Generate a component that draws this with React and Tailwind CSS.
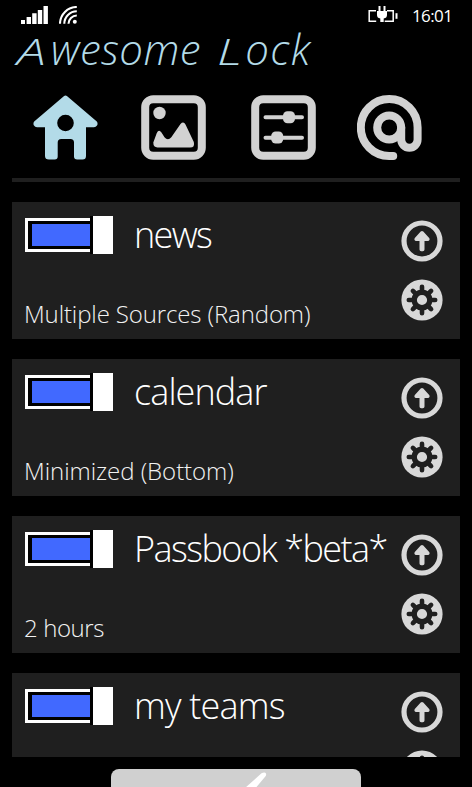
const widgets = [
  { name: "news", detail: "Multiple Sources (Random)", nameTracking: "tracking-[-1.7px]", detailTracking: "tracking-[-0.12px]" },
  { name: "calendar", detail: "Minimized (Bottom)", nameTracking: "tracking-[-0.9px]", detailTracking: "tracking-[-0.05px]" },
  { name: "Passbook *beta*", detail: "2 hours", nameTracking: "tracking-[-1.55px]", detailTracking: "tracking-[-0.4px]" },
  { name: "my teams", nameTracking: "tracking-[-0.8px]" },
];

function SignalIcon() {
  return (
    <svg width="27" height="18" viewBox="0 0 27 18" fill="#fff">
      <path d="M0 14h4v4H0zM5.6 11h4.4v7h-4.4zM11.2 7.2h4.4V18h-4.4zM16.8 4h4.4v14h-4.4zM22.5 0h4.4v18h-4.4z" />
    </svg>
  );
}

function WifiIcon() {
  return (
    <svg width="18" height="18" viewBox="0 0 18 18" fill="none" stroke="#fff" strokeWidth="2.1">
      <path d="M1 17.8A16.8 16.8 0 0 1 17.8 1M5.3 17.8A12.5 12.5 0 0 1 17.8 5.3M9.5 17.8a8.3 8.3 0 0 1 8.3-8.3" />
      <circle cx="15.8" cy="15.8" r="2" fill="#fff" stroke="none" />
    </svg>
  );
}

function BatteryIcon() {
  return (
    <svg width="30" height="18" viewBox="0 0 30 18" fill="none" stroke="#fff" strokeWidth="1.5">
      <path d="M8 4.8H1.2v10.4h7M19 4.8h6.2v10.4h-8.5" />
      <path d="M28.5 7.2v5.6" strokeWidth="2" />
      <path d="M9 5h10v4q0 3-3.3 3.5V16h-3.4v-3.5Q9 12 9 9zM10.5 0h2v6h-2zM15.5 0h2v6h-2z" fill="#fff" stroke="none" />
    </svg>
  );
}

function HomeIcon() {
  return (
    <svg width="65" height="65" viewBox="0 0 65 65" fill="#b3dbe8">
      <path
        fillRule="evenodd"
        d="M30.8 1.2q1.7-1.4 3.4 0L63.8 26.5q1.4 2 .2 4-1.2 1.7-3 1.7h-8V61q0 3.5-3.5 3.5h-5.3q-3.2 0-3.2-3V47.5q0-3.5-3.5-3.5h-9.3q-3.5 0-3.5 3.5v14q0 3-3 3h-5.7Q12 64.5 12 61V32.2H4q-2 0-3-1.7-1.2-2 .2-4zM32.5 19.7a8.3 8.3 0 1 0 0 16.6 8.3 8.3 0 0 0 0-16.6z"
      />
    </svg>
  );
}

function PictureIcon() {
  return (
    <svg width="65" height="65" viewBox="0 0 65 65" fill="#d2d2d2">
      <rect x="4.2" y="4.2" width="56.6" height="56.6" rx="8" fill="none" stroke="#d2d2d2" strokeWidth="8" />
      <circle cx="18.5" cy="18" r="6.2" />
      <path d="M12.3 47.5l3.5-9.5q2-4.2 4.5-.8l3.2 5q3.4 4 6.8 0L39.5 29q3-3.2 5 .5l8.3 17.5q1.5 5.5-3.8 5.5H16.500q-4.200-.2-4.200-5z" />
    </svg>
  );
}

function SlidersIcon() {
  return (
    <svg width="65" height="65" viewBox="0 0 65 65" fill="none" stroke="#d2d2d2">
      <rect x="4.2" y="4.2" width="56.6" height="56.6" rx="8" strokeWidth="8" />
      <path d="M14.5 22.3h36.5M14.5 42.7h36.5" strokeWidth="4" strokeLinecap="round" />
      <rect x="32" y="16.3" width="12" height="12" rx="4.5" fill="#d2d2d2" stroke="none" />
      <rect x="20.2" y="36.5" width="12" height="12" rx="4.5" fill="#d2d2d2" stroke="none" />
    </svg>
  );
}

function AtIcon() {
  return (
    <svg width="65" height="65" viewBox="0 0 65 65" fill="none" stroke="#d2d2d2" strokeWidth="8" strokeLinecap="round">
      <circle cx="32.2" cy="32.5" r="12" />
      <path d="M44.2 32.5v12a8.2 8.2 0 0 0 16.4 0V32.5A28.4 28.4 0 1 0 32.2 60.9h4" />
    </svg>
  );
}

function ArrowIcon() {
  return (
    <svg className="block" width="42" height="42" viewBox="-21 -21 42 42" fill="#d8d8d8">
      <circle r="18" fill="none" stroke="#d8d8d8" strokeWidth="5.2" />
      <path d="M-1.3-9.5q1.3-1 2.6 0L7.2-3q1.200 2-1 3H2.5v8.5q0 1.7-1.7 1.7h-1.6q-1.7 0-1.7-1.7V0h-3.7q-2.2-1-1-3z" />
    </svg>
  );
}

function GearIcon() {
  return (
    <svg className="block" width="42" height="42" viewBox="-21 -21 42 42">
      <circle r="20.6" fill="#d8d8d8" />
      <circle r="7.8" fill="none" stroke="#1f1f1f" strokeWidth="5.4" />
      <path
        d="M0-9v-4.2M0 9v4.2M-9 0h-4.2M9 0h4.2M-6.5-6.5l-2.6-2.6M6.5 6.5l2.6 2.6M-6.5 6.5l-2.6 2.6M6.5-6.5l2.6-2.6"
        stroke="#1f1f1f"
        strokeWidth="4.6"
        strokeLinecap="round"
      />
    </svg>
  );
}

function Toggle() {
  return (
    <div className="flex h-[38px] w-[88px] shrink-0 items-center">
      <div className="h-[34px] w-[65px] border-[3px] border-r-0 border-white bg-black py-[3px] pl-[4px]">
        <div className="h-full bg-[#4169ff]" />
      </div>
      <div className="h-[38px] w-[23px] border-l-[3px] border-black bg-white" />
    </div>
  );
}

function WidgetCard({ name, detail, nameTracking, detailTracking }) {
  return (
    <section className="flex h-[137.3px] shrink-0 bg-[#1f1f1f] pl-[13px]">
      <div className="flex min-w-0 flex-1 flex-col">
        <div className="flex pt-[14px]">
          <Toggle />
          <h2 className={`ml-[21px] mt-[-5px] h-[48px] whitespace-nowrap text-[36px] leading-[48px] font-light text-white ${nameTracking}`}>
            {name}
          </h2>
        </div>
        {detail && (
          <p className={`-ml-px mt-[39px] whitespace-nowrap text-[24px] leading-[32px] font-light text-[#f2f2f2] ${detailTracking}`}>{detail}</p>
        )}
      </div>
      <div className="mr-[17px] flex w-[42px] flex-col gap-[17px] pt-[18px]">
        <button><ArrowIcon /></button>
        <button><GearIcon /></button>
      </div>
    </section>
  );
}

export default function App() {
  return (
    <div className="flex h-[787px] w-[472px] flex-col overflow-hidden bg-black font-['Open_Sans',sans-serif]">
      <header className="flex h-[30px] shrink-0 pl-[21px] pr-[21px]">
        <div className="flex gap-[11px] pt-[6px]">
          <SignalIcon />
          <WifiIcon />
        </div>
        <div className="ml-auto flex pt-[6px]">
          <BatteryIcon />
          <span className="ml-[14px] mt-[-1px] w-[39px] whitespace-nowrap text-[17px] leading-[22px] tracking-[-0.6px] text-white">16:01</span>
        </div>
      </header>

      {/* capitals are stretched wide, like pen lettering */}
      <h1 className="flex h-[42px] shrink-0 items-baseline whitespace-pre pl-[17px] text-[42px] leading-[38px] font-light italic text-[#b3dbe8]">
        <span className="inline-block w-[34px] origin-bottom-left scale-x-140 text-[37px]">A</span>
        <span className="tracking-[0.4px]">wesome </span>
        <span className="ml-[5px] inline-block w-[28px] origin-bottom-left scale-x-140 text-[37px]">L</span>
        <span className="tracking-[1.4px]">ock</span>
      </h1>

      <nav className="flex h-[106px] shrink-0 gap-[43.2px] pl-[33px] pt-[23px]">
        <button className="h-[65px]"><HomeIcon /></button>
        <button className="h-[65px]"><PictureIcon /></button>
        <button className="ml-[1.8px] h-[65px]"><SlidersIcon /></button>
        <button className="-ml-[2.2px] h-[65px]"><AtIcon /></button>
      </nav>
      <div className="mx-3 h-[4px] shrink-0 bg-[#1f1f1f]" />

      <main className="mx-3 mt-[19.5px] flex h-[555.5px] shrink-0 flex-col gap-5 overflow-hidden">
        {widgets.map((widget) => (
          <WidgetCard key={widget.name} {...widget} />
        ))}
      </main>

      <button className="ml-[111px] mt-[12px] h-[60px] w-[250px] shrink-0 rounded-t-[8px] bg-[#d0d0d0]">
        <svg className="block" width="250" height="60" viewBox="0 0 250 60" fill="#fff">
          <path d="M125 27l25.5-22.7q3.5-2 4.6.5.3 1.700-1 3L132 34z" />
        </svg>
      </button>
    </div>
  );
}
